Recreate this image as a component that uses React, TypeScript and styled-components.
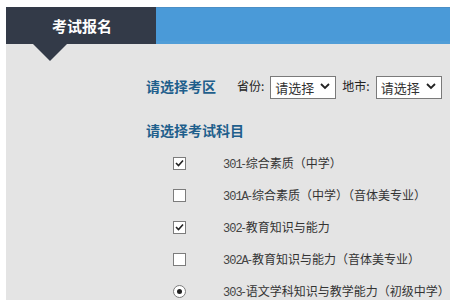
import styled, { createGlobalStyle } from 'styled-components';

const GlobalStyle = createGlobalStyle`
  html, body {
    margin:0;
    padding:0;
    background:#fff;
  }
  body {
    font-family:"Noto Sans CJK SC", "Liberation Sans", sans-serif;
    color:#333;
  }
`;

const Page = styled.div`
  padding:7px 0 0 6px;
  width:450px;
  height:300px;
  box-sizing:border-box;
  overflow:hidden;
`;

const TopBar = styled.div`
  display:flex;
  height:37px;
  background:#4a9ad8;
  border-top:1px solid #4b8fc6;
  border-bottom:3px solid #509dd7;
  box-sizing:border-box;
`;

const Tab = styled.div`
  position:relative;
  width:150px;
  margin:-1px 0 -3px;
  background:#333a48;
  color:#fff;
  font-size:15px;
  font-weight:bold;
  display:flex;
  align-items:center;
  padding-left:46px;
  box-sizing:border-box;

  &::after {
    content:'';
    position:absolute;
    left:27px;
    top:100%;
    border-left:17px solid transparent;
    border-right:17px solid transparent;
    border-top:17px solid #333a48;
  }
`;

const Content = styled.div`
  background:#e4e4e4;
  height:100%;
  padding:30px 0 0 140px;
  box-sizing:border-box;
`;

const RegionRow = styled.div`
  display:flex;
  align-items:center;
  height:23px;
`;

const Heading = styled.div<{ $gap?: number }>`
  font-size:14px;
  font-weight:bold;
  color:#1f5f8c;
  margin-right:${p => p.$gap ?? 0}px;
  line-height:20px;
`;

const Label = styled.span`
  font-size:12px;
  color:#222;
  margin-right:6px;
`;

const SelectWrap = styled.div<{ $mr?: number }>`
  position:relative;
  width:66px;
  height:23px;
  margin-right:${p => p.$mr ?? 0}px;

  svg {
    position:absolute;
    right:6px;
    top:9px;
    pointer-events:none;
  }
`;

const Select = styled.select`
  appearance:none;
  width:100%;
  height:100%;
  border:1px solid #7a7a7a;
  border-radius:0;
  background:#fff;
  font-family:"Noto Sans CJK SC", sans-serif;
  font-size:13px;
  color:#333;
  padding:0 0 0 4px;
  outline:none;
`;

const SubjectsHeading = styled(Heading)`
  margin-top:23px;
`;

const List = styled.div`
  padding:7px 0 0 27px;
`;

const Item = styled.div`
  display:flex;
  align-items:center;
  height:32px;
`;

const Box = styled.span`
  width:13px;
  height:13px;
  box-sizing:border-box;
  border:1px solid #7c7c7c;
  background:#fff;
  margin-right:37px;
  display:flex;
  align-items:center;
  justify-content:center;
`;

const Radio = styled(Box)`
  border-radius:50%;

  &::after {
    content:'';
    width:5px;
    height:5px;
    border-radius:50%;
    background:#222;
  }
`;

const ItemText = styled.span`
  font-size:12px;
  color:#333;
  white-space:nowrap;
`;

const Code = styled.span`
  font-family:"Liberation Mono", monospace;
  font-size:12px;
  letter-spacing:-1px;
  color:#444;
`;

const Chevron = () => (
  <svg width="10" height="7" viewBox="0 0 10 7">
    <path d="M1 1 L5 5 L9 1" fill="none" stroke="#222" strokeWidth="1.8" />
  </svg>
);

const Check = () => (
  <svg width="9" height="8" viewBox="0 0 9 8">
    <path d="M1 4 L3.5 6.5 L8 1.5" fill="none" stroke="#222" strokeWidth="1.6" />
  </svg>
);

const subjects = [
  { code: '301', name: '综合素质（中学）', kind: 'check', on: true },
  { code: '301A', name: '综合素质（中学）（音体美专业）', kind: 'check', on: false },
  { code: '302', name: '教育知识与能力', kind: 'check', on: true },
  { code: '302A', name: '教育知识与能力（音体美专业）', kind: 'check', on: false },
  { code: '303', name: '语文学科知识与教学能力（初级中学）', kind: 'radio', on: true },
];

export default function App() {
  return (
    <Page>
      <GlobalStyle />
      <TopBar>
        <Tab>考试报名</Tab>
      </TopBar>
      <Content>
        <RegionRow>
          <Heading $gap={21}>请选择考区</Heading>
          <Label>省份:</Label>
          <SelectWrap $mr={6}>
            <Select defaultValue="">
              <option value="">请选择</option>
            </Select>
            <Chevron />
          </SelectWrap>
          <Label>地市:</Label>
          <SelectWrap>
            <Select defaultValue="">
              <option value="">请选择</option>
            </Select>
            <Chevron />
          </SelectWrap>
        </RegionRow>

        <SubjectsHeading>请选择考试科目</SubjectsHeading>
        <List>
          {subjects.map(s => (
            <Item key={s.code}>
              {s.kind === 'radio' ? <Radio /> : <Box>{s.on && <Check />}</Box>}
              <ItemText>
                <Code>{s.code}</Code>-{s.name}
              </ItemText>
            </Item>
          ))}
        </List>
      </Content>
    </Page>
  );
}
